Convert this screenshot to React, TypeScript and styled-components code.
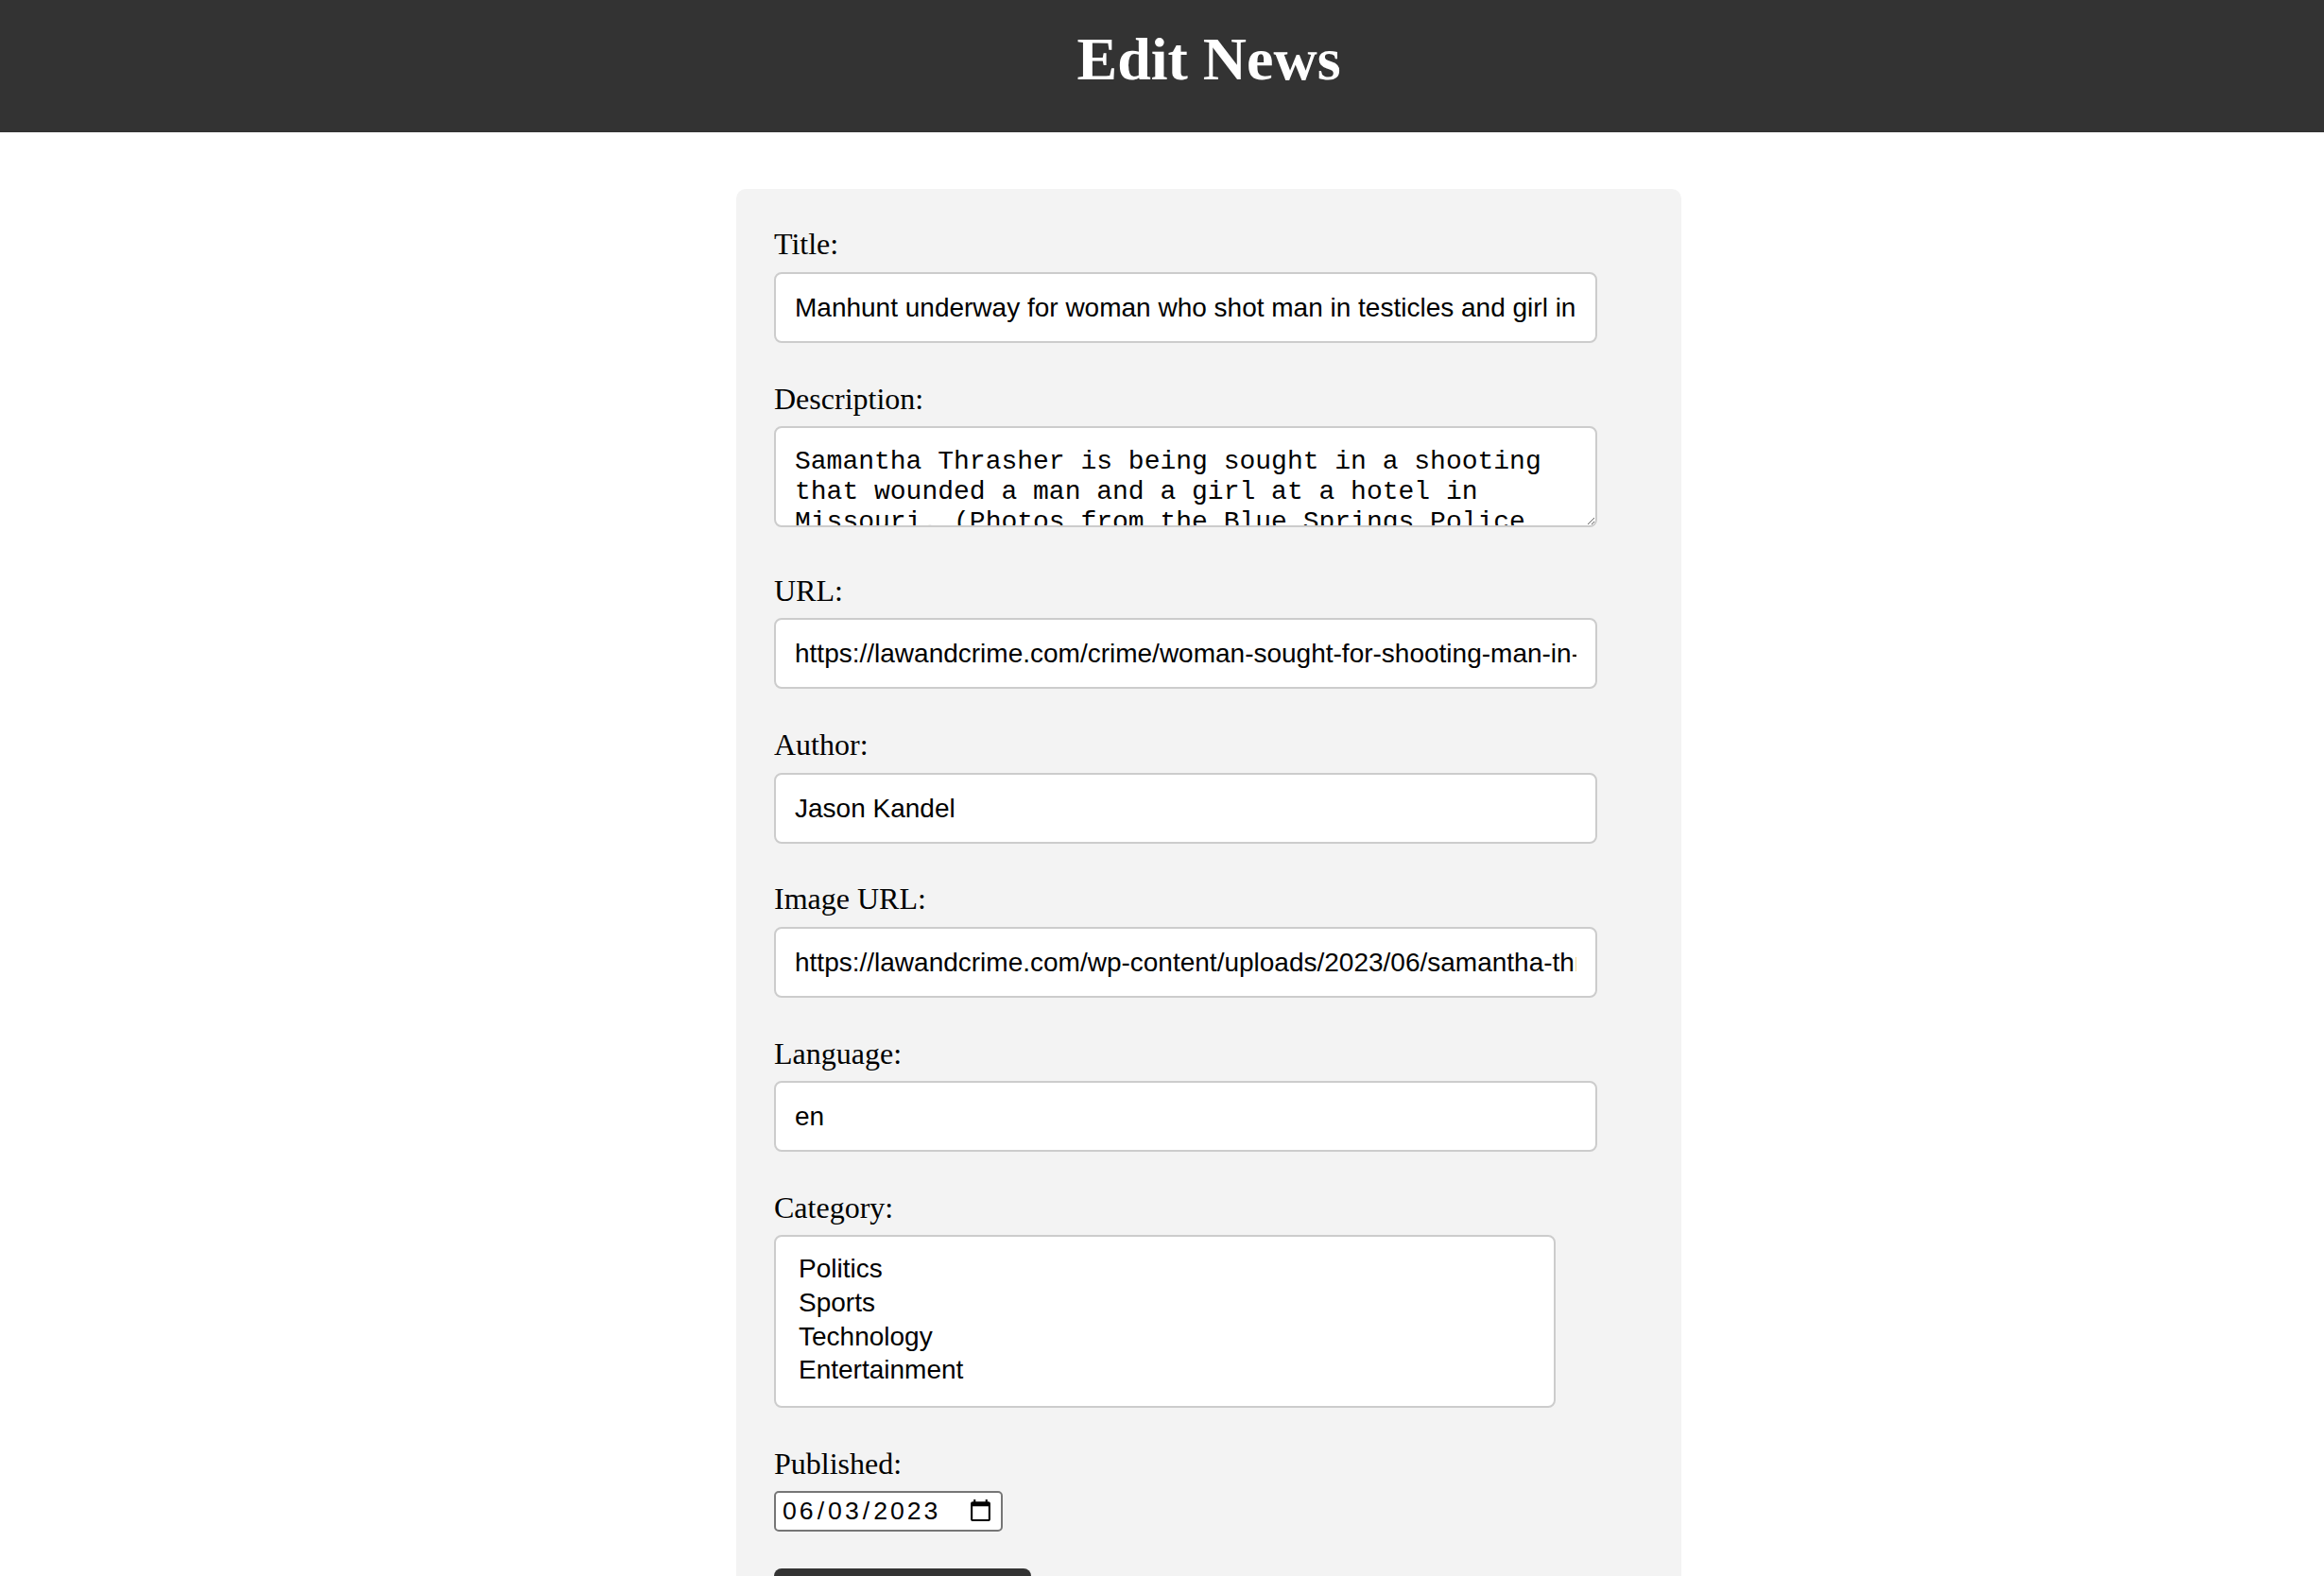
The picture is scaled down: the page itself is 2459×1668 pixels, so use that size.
import React from "react";
import styled, { createGlobalStyle } from "styled-components";

const GlobalStyle = createGlobalStyle`
  html, body {
    margin: 0;
    padding: 0;
    overflow: hidden;
    background: #ffffff;
  }
  body {
    font-family: "Liberation Serif", "Times New Roman", serif;
    color: #000;
  }
`;

const Page = styled.div`
  width: 2558px;
`;

const Header = styled.header`
  box-sizing: border-box;
  height: 140px;
  padding-top: 26px;
  background: #333333;
  color: #ffffff;
  text-align: center;
`;

const Heading = styled.h1`
  margin: 0;
  font-family: "Liberation Serif", "Times New Roman", serif;
  font-size: 64px;
  font-weight: bold;
  line-height: normal;
`;

const Card = styled.form`
  box-sizing: border-box;
  width: 1000px;
  margin: 60px auto 0;
  padding: 40px 40px 40px;
  background: #f3f3f3;
  border-radius: 10px;
`;

const Group = styled.div<{ $gap?: number }>`
  padding-bottom: ${(p) => p.$gap ?? 40.7}px;
`;

const Label = styled.label`
  display: block;
  margin-bottom: 10.5px;
  font-family: "Liberation Serif", "Times New Roman", serif;
  font-size: 32px;
  line-height: normal;
`;

const TextInput = styled.input`
  display: block;
  box-sizing: border-box;
  width: 871px;
  height: 75px;
  padding: 1px 20px 0;
  border: 2px solid #cccccc;
  border-radius: 8px;
  background: #ffffff;
  font-family: "Liberation Sans", Arial, sans-serif;
  font-size: 28px;
  color: #000;
  outline: none;
`;

const TextArea = styled.textarea`
  display: block;
  box-sizing: border-box;
  width: 871px;
  height: 106.6px;
  padding: 20px;
  border: 2px solid #cccccc;
  border-radius: 8px;
  background: #ffffff;
  font-family: "Liberation Mono", "Courier New", monospace;
  font-size: 28px;
  line-height: 32px;
  color: #000;
  overflow: hidden;
  resize: vertical;
  outline: none;
`;

const ListBox = styled.div`
  box-sizing: border-box;
  width: 827px;
  padding: 16px 20px 20px;
  border: 2px solid #cccccc;
  border-radius: 8px;
  background: #ffffff;
`;

const Option = styled.div`
  padding: 0 4px;
  font-family: "Liberation Sans", Arial, sans-serif;
  font-size: 28px;
  line-height: 35.7px;
  color: #000;
`;

const DateInput = styled.input`
  display: block;
  box-sizing: border-box;
  width: 242px;
  height: 43px;
  padding: 2px 6px;
  border: 2px solid #767676;
  border-radius: 5px;
  background: #ffffff;
  font-family: "Liberation Sans", Arial, sans-serif;
  font-size: 26.67px;
  letter-spacing: 3px;
  color: #000;
`;

const SubmitButton = styled.button`
  padding: 20px 40px;
  border: none;
  border-radius: 8px;
  background: #333333;
  color: #ffffff;
  font-family: "Liberation Sans", Arial, sans-serif;
  font-size: 32px;
  cursor: pointer;
`;

const categories = ["Politics", "Sports", "Technology", "Entertainment"];

export default function App() {
  return (
    <Page>
      <GlobalStyle />
      <Header>
        <Heading>Edit News</Heading>
      </Header>
      <Card onSubmit={(e) => e.preventDefault()}>
        <Group $gap={41.2}>
          <Label htmlFor="title">Title:</Label>
          <TextInput
            id="title"
            type="text"
            defaultValue="Manhunt underway for woman who shot man in testicles and girl in head at Missouri hotel"
          />
        </Group>
        <Group $gap={49.2}>
          <Label htmlFor="description">Description:</Label>
          <TextArea
            id="description"
            defaultValue="Samantha Thrasher is being sought in a shooting that wounded a man and a girl at a hotel in Missouri. (Photos from the Blue Springs Police Department)"
          />
        </Group>
        <Group>
          <Label htmlFor="url">URL:</Label>
          <TextInput
            id="url"
            type="text"
            defaultValue="https://lawandcrime.com/crime/woman-sought-for-shooting-man-in-testicles-and-girl-in-head-at-missouri-hotel/"
          />
        </Group>
        <Group>
          <Label htmlFor="author">Author:</Label>
          <TextInput id="author" type="text" defaultValue="Jason Kandel" />
        </Group>
        <Group>
          <Label htmlFor="image">Image URL:</Label>
          <TextInput
            id="image"
            type="text"
            defaultValue="https://lawandcrime.com/wp-content/uploads/2023/06/samantha-thrasher.jpg"
          />
        </Group>
        <Group>
          <Label htmlFor="language">Language:</Label>
          <TextInput id="language" type="text" defaultValue="en" />
        </Group>
        <Group $gap={40.5}>
          <Label>Category:</Label>
          <ListBox role="listbox">
            {categories.map((c) => (
              <Option key={c} role="option">
                {c}
              </Option>
            ))}
          </ListBox>
        </Group>
        <Group $gap={39}>
          <Label htmlFor="published">Published:</Label>
          <DateInput id="published" type="date" defaultValue="2023-06-03" />
        </Group>
        <SubmitButton type="submit">Update News</SubmitButton>
      </Card>
    </Page>
  );
}
